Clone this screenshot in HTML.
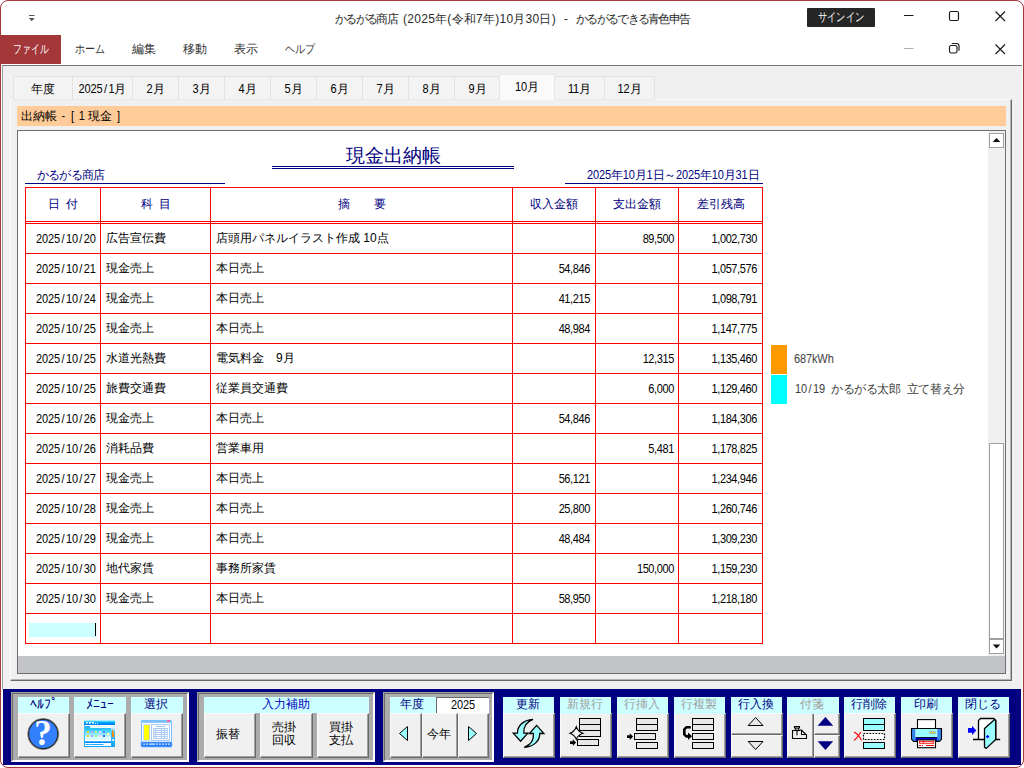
<!DOCTYPE html>
<html lang="ja"><head><meta charset="utf-8"><title>かるがる商店</title>
<style>
html,body{margin:0;padding:0;}
body{width:1024px;height:768px;overflow:hidden;background:#fff;position:relative;font-family:"Liberation Sans",sans-serif;font-size:12px;color:#000;line-height:1;}
div,span{box-sizing:border-box;}
.a{position:absolute;}
#win{position:absolute;left:0;top:0;width:1024px;height:768px;border:1px solid #a4373a;border-radius:8px;background:#fff;overflow:hidden;}
#inner{position:absolute;left:-1px;top:-1px;width:1024px;height:768px;}
/* title */
#ttl{position:absolute;left:335px;top:13px;width:400px;text-align:left;font-size:12px;color:#2b2b2b;white-space:nowrap;}
#signin{position:absolute;left:807px;top:8px;width:68px;height:19px;background:#262626;color:#fff;font-size:12px;text-align:center;line-height:19px;border-radius:1px;white-space:nowrap;}
#filetab{position:absolute;left:0;top:35px;width:61px;height:29px;background:#a4373a;color:#fff;text-align:center;line-height:29px;font-size:12px;white-space:nowrap;}
.rt{position:absolute;top:43px;height:14px;font-size:12px;color:#333;white-space:nowrap;text-align:center;}
.sq{display:inline-block;transform-origin:50% 50%;}
/* form area */
#form{position:absolute;left:2px;top:65px;width:1020px;height:624px;background:#f0f0f0;border-left:1px solid #a0a0a0;border-top:1px solid #767676;}
.tab{position:absolute;top:76px;height:24px;background:#f3f3f3;border:1px solid #e2e2e2;border-bottom:1px solid #e8e8e8;text-align:center;font-size:12px;line-height:24px;white-space:nowrap;}
.tab.sel{top:74px;height:26px;border-bottom:none;background:#fafafa;line-height:25px;z-index:2;border-color:#e8e8e8;}
#tabpage{position:absolute;left:10px;top:99px;width:1002px;height:582px;border-left:1px solid #fcfcfc;border-top:1px solid #f8f8f8;border-right:1px solid #696969;border-bottom:1px solid #696969;}
#tabpage:after{content:"";position:absolute;left:0;top:0;right:0;bottom:0;border-right:1px solid #b4b4b4;border-bottom:1px solid #b4b4b4;}
#band{position:absolute;left:17px;top:106px;width:989px;height:20px;background:#ffcc99;font-size:12px;line-height:20px;padding-left:4px;white-space:nowrap;}
#sub{position:absolute;left:17px;top:130px;width:989px;height:544px;background:#fff;border:1px solid #6e6e6e;}
#gband{position:absolute;left:18px;top:656px;width:987px;height:17px;background:#c4c5c9;}
/* table */
.navy{color:#000080;}
.vl{position:absolute;top:187px;width:1px;height:457px;background:#f00;}
.hl{position:absolute;left:25px;width:738px;height:1px;background:#f00;}
.hd{position:absolute;top:198px;height:14px;font-size:12px;color:#000080;text-align:center;white-space:nowrap;}
.rw{position:absolute;left:0;height:29px;width:1024px;font-size:12px;line-height:29px;white-space:nowrap;}
.rw span{position:absolute;top:0;height:29px;}
.rw span.n{top:1px;}
.sl{display:inline-block;width:5.9px;text-align:center;letter-spacing:0;}
.rw span.n span{position:static;}
.cm{letter-spacing:-0.3px;}
.n{font-family:"Liberation Sans",sans-serif;font-size:11px;letter-spacing:-0.12px;display:inline-block;transform:scaleY(1.17);transform-origin:50% 62%;}
.c1{left:36px;}
.c2{left:106px;}
.c3{left:216px;}
.c4{right:434px;letter-spacing:-0.4px;}
.c5{right:350px;letter-spacing:-0.4px;}
.c6{right:267px;letter-spacing:-0.4px;}
/* scrollbar */
#sbtrack{position:absolute;left:988px;top:131px;width:17px;height:525px;background:#f0f0f0;}
.sbb{position:absolute;left:989px;width:15px;height:15px;background:#fff;border:1px solid #a0a0a0;}
/* toolbar */
#tb{position:absolute;left:3px;top:689px;width:1018px;height:76px;background:#000080;}
.grp{position:absolute;top:692px;height:70px;background:#acacac;border-left:1px solid #a0a0a0;border-top:1px solid #a0a0a0;border-right:1px solid #fff;border-bottom:1px solid #fff;}
.grp:after{content:"";position:absolute;left:0;top:0;right:0;bottom:0;border-left:1px solid #696969;border-top:1px solid #696969;border-right:1px solid #fff;border-bottom:1px solid #fff;}
.lb{position:absolute;top:697px;height:16px;background:#ccffff;color:#000080;font-size:12px;text-align:center;line-height:15px;white-space:nowrap;text-indent:-2px;}
.lb.dis{color:#a0a0a0;height:17px;z-index:3;}
.bt{position:absolute;background:#f0f0f0;border-right:1px solid #696969;border-bottom:1px solid #696969;border-left:1px solid #fafafa;border-top:1px solid #fafafa;font-size:12px;text-align:center;white-space:nowrap;}
.bt:after{content:"";position:absolute;left:0;top:0;right:0;bottom:0;border-right:1px solid #a0a0a0;border-bottom:1px solid #a0a0a0;}
.bt svg{position:absolute;left:0;top:0;}

</style></head><body>
<div id="win"><div id="inner">
<!-- title bar -->
<div id="ttl"><span style="letter-spacing:-1.65px">かるがる商店</span><span style="letter-spacing:0.25px;margin-left:6px">(2025年(令和7年)10月30日)</span><span style="display:inline-block;width:20px;text-align:center">-</span><span style="letter-spacing:-1.68px">かるがるできる青色申告</span></div>
<div id="signin"><span class="sq" style="transform:scaleX(.77)">サインイン</span></div>
<div id="filetab"><span class="sq" style="transform:scaleX(.73)">ファイル</span></div>
<div class="rt" style="left:70px;width:40px;"><span class="sq" style="transform:scaleX(.84)">ホーム</span></div>
<div class="rt" style="left:124px;width:40px;">編集</div>
<div class="rt" style="left:175px;width:40px;">移動</div>
<div class="rt" style="left:226px;width:40px;">表示</div>
<div class="rt" style="left:279.5px;width:40px;"><span class="sq" style="transform:scaleX(.84)">ヘルプ</span></div>

<!-- form area -->
<div id="form"></div>
<div id="tabpage"></div>
<div class="tab" style="left:13px;width:60px;">年度</div>
<div class="tab" style="left:72px;width:61px;"><span class="n">2025<span class="sl">/</span>1</span>月</div>
<div class="tab" style="left:132px;width:47px;"><span class="n">2</span>月</div>
<div class="tab" style="left:178px;width:47px;"><span class="n">3</span>月</div>
<div class="tab" style="left:224px;width:47px;"><span class="n">4</span>月</div>
<div class="tab" style="left:270px;width:47px;"><span class="n">5</span>月</div>
<div class="tab" style="left:316px;width:47px;"><span class="n">6</span>月</div>
<div class="tab" style="left:362px;width:47px;"><span class="n">7</span>月</div>
<div class="tab" style="left:408px;width:47px;"><span class="n">8</span>月</div>
<div class="tab" style="left:454px;width:47px;"><span class="n">9</span>月</div>
<div class="tab" style="left:554px;width:51px;"><span class="n">11</span>月</div>
<div class="tab" style="left:604px;width:51px;"><span class="n">12</span>月</div>
<div class="tab sel" style="left:499px;width:56px;"><span class="n">10</span>月</div>
<div id="band">出納帳 <span class="n"><span class="sl">-</span></span> <span class="n"><span class="sl">[</span></span> <span class="n">1</span> 現金 <span class="n"><span class="sl">]</span></span></div>
<div id="sub"></div>
<div id="gband"></div>

<!-- report header -->
<div class="a navy" style="left:346px;top:146px;width:96px;font-size:19px;line-height:19px;white-space:nowrap;">現金出納帳</div>
<div class="a" style="left:272px;top:166px;width:242px;height:3px;border-top:1px solid #000080;border-bottom:1px solid #000080;"></div>
<div class="a navy" style="left:37px;top:169px;white-space:nowrap;letter-spacing:-0.8px;">かるがる商店</div>
<div class="a" style="left:25px;top:183px;width:200px;height:1px;background:#000080;"></div>
<div class="a navy" style="left:587px;top:169px;white-space:nowrap;letter-spacing:-0.25px;"><span class="n">2025</span>年<span class="n">10</span>月<span class="n">1</span>日～<span class="n">2025</span>年<span class="n">10</span>月<span class="n">31</span>日</div>
<div class="a" style="left:565px;top:183px;width:198px;height:1px;background:#000080;"></div>

<!-- table grid -->
<div class="hl" style="top:187px"></div>
<div class="hl" style="top:221px"></div>
<div class="hl" style="top:223px"></div>
<div class="hl" style="top:253px"></div>
<div class="hl" style="top:283px"></div>
<div class="hl" style="top:313px"></div>
<div class="hl" style="top:343px"></div>
<div class="hl" style="top:373px"></div>
<div class="hl" style="top:403px"></div>
<div class="hl" style="top:433px"></div>
<div class="hl" style="top:463px"></div>
<div class="hl" style="top:493px"></div>
<div class="hl" style="top:523px"></div>
<div class="hl" style="top:553px"></div>
<div class="hl" style="top:583px"></div>
<div class="hl" style="top:613px"></div>
<div class="hl" style="top:643px"></div>
<div class="vl" style="left:25px"></div>
<div class="vl" style="left:100px"></div>
<div class="vl" style="left:210px"></div>
<div class="vl" style="left:512px"></div>
<div class="vl" style="left:595px"></div>
<div class="vl" style="left:678px"></div>
<div class="vl" style="left:762px"></div>
<div class="hd" style="left:26px;width:74px;">日&ensp;付</div>
<div class="hd" style="left:101px;width:109px;">科&ensp;目</div>
<div class="hd" style="left:211px;width:301px;">摘　　要</div>
<div class="hd" style="left:513px;width:82px;">収入金額</div>
<div class="hd" style="left:596px;width:82px;">支出金額</div>
<div class="hd" style="left:679px;width:83px;">差引残高</div>
<div class="rw" style="top:224px"><span class="n c1">2025<span class="sl">/</span>10<span class="sl">/</span>20</span><span class="j c2">広告宣伝費</span><span class="j c3">店頭用パネルイラスト作成 10点</span><span class="n c4"></span><span class="n c5">89<span class="cm">,</span>500</span><span class="n c6">1<span class="cm">,</span>002<span class="cm">,</span>730</span></div>
<div class="rw" style="top:254px"><span class="n c1">2025<span class="sl">/</span>10<span class="sl">/</span>21</span><span class="j c2">現金売上</span><span class="j c3">本日売上</span><span class="n c4">54<span class="cm">,</span>846</span><span class="n c5"></span><span class="n c6">1<span class="cm">,</span>057<span class="cm">,</span>576</span></div>
<div class="rw" style="top:284px"><span class="n c1">2025<span class="sl">/</span>10<span class="sl">/</span>24</span><span class="j c2">現金売上</span><span class="j c3">本日売上</span><span class="n c4">41<span class="cm">,</span>215</span><span class="n c5"></span><span class="n c6">1<span class="cm">,</span>098<span class="cm">,</span>791</span></div>
<div class="rw" style="top:314px"><span class="n c1">2025<span class="sl">/</span>10<span class="sl">/</span>25</span><span class="j c2">現金売上</span><span class="j c3">本日売上</span><span class="n c4">48<span class="cm">,</span>984</span><span class="n c5"></span><span class="n c6">1<span class="cm">,</span>147<span class="cm">,</span>775</span></div>
<div class="rw" style="top:344px"><span class="n c1">2025<span class="sl">/</span>10<span class="sl">/</span>25</span><span class="j c2">水道光熱費</span><span class="j c3">電気料金　9月</span><span class="n c4"></span><span class="n c5">12<span class="cm">,</span>315</span><span class="n c6">1<span class="cm">,</span>135<span class="cm">,</span>460</span></div>
<div class="rw" style="top:374px"><span class="n c1">2025<span class="sl">/</span>10<span class="sl">/</span>25</span><span class="j c2">旅費交通費</span><span class="j c3">従業員交通費</span><span class="n c4"></span><span class="n c5">6<span class="cm">,</span>000</span><span class="n c6">1<span class="cm">,</span>129<span class="cm">,</span>460</span></div>
<div class="rw" style="top:404px"><span class="n c1">2025<span class="sl">/</span>10<span class="sl">/</span>26</span><span class="j c2">現金売上</span><span class="j c3">本日売上</span><span class="n c4">54<span class="cm">,</span>846</span><span class="n c5"></span><span class="n c6">1<span class="cm">,</span>184<span class="cm">,</span>306</span></div>
<div class="rw" style="top:434px"><span class="n c1">2025<span class="sl">/</span>10<span class="sl">/</span>26</span><span class="j c2">消耗品費</span><span class="j c3">営業車用</span><span class="n c4"></span><span class="n c5">5<span class="cm">,</span>481</span><span class="n c6">1<span class="cm">,</span>178<span class="cm">,</span>825</span></div>
<div class="rw" style="top:464px"><span class="n c1">2025<span class="sl">/</span>10<span class="sl">/</span>27</span><span class="j c2">現金売上</span><span class="j c3">本日売上</span><span class="n c4">56<span class="cm">,</span>121</span><span class="n c5"></span><span class="n c6">1<span class="cm">,</span>234<span class="cm">,</span>946</span></div>
<div class="rw" style="top:494px"><span class="n c1">2025<span class="sl">/</span>10<span class="sl">/</span>28</span><span class="j c2">現金売上</span><span class="j c3">本日売上</span><span class="n c4">25<span class="cm">,</span>800</span><span class="n c5"></span><span class="n c6">1<span class="cm">,</span>260<span class="cm">,</span>746</span></div>
<div class="rw" style="top:524px"><span class="n c1">2025<span class="sl">/</span>10<span class="sl">/</span>29</span><span class="j c2">現金売上</span><span class="j c3">本日売上</span><span class="n c4">48<span class="cm">,</span>484</span><span class="n c5"></span><span class="n c6">1<span class="cm">,</span>309<span class="cm">,</span>230</span></div>
<div class="rw" style="top:554px"><span class="n c1">2025<span class="sl">/</span>10<span class="sl">/</span>30</span><span class="j c2">地代家賃</span><span class="j c3">事務所家賃</span><span class="n c4"></span><span class="n c5">150<span class="cm">,</span>000</span><span class="n c6">1<span class="cm">,</span>159<span class="cm">,</span>230</span></div>
<div class="rw" style="top:584px"><span class="n c1">2025<span class="sl">/</span>10<span class="sl">/</span>30</span><span class="j c2">現金売上</span><span class="j c3">本日売上</span><span class="n c4">58<span class="cm">,</span>950</span><span class="n c5"></span><span class="n c6">1<span class="cm">,</span>218<span class="cm">,</span>180</span></div>
<div class="a" style="left:29px;top:623px;width:67px;height:14px;background:#ccffff;"></div>
<div class="a" style="left:95px;top:623px;width:1px;height:13px;background:#000;"></div>

<!-- sticky notes -->
<div class="a" style="left:771px;top:345px;width:16px;height:29px;background:#ff9900;"></div>
<div class="a" style="left:771px;top:375px;width:16px;height:29px;background:#00ffff;"></div>
<div class="a" style="left:794px;top:353px;color:#404040;white-space:nowrap;"><span class="n">687kWh</span></div>
<div class="a" style="left:795px;top:383px;color:#404040;white-space:nowrap;letter-spacing:-0.35px;"><span class="n">10<span class="sl">/</span>19</span>&nbsp; かるがる太郎&nbsp; 立て替え分</div>

<!-- scrollbar -->
<div id="sbtrack"></div>
<div class="sbb" style="top:133px;"></div>
<div class="sbb" style="top:639px;"></div>
<div class="sbb" style="top:443px;height:196px;"></div>

<!-- toolbar -->
<div id="tb"></div>
<div class="grp" style="left:11px;width:178px;"></div>
<div class="grp" style="left:197px;width:178px;"></div>
<div class="grp" style="left:383px;width:111px;"></div>

<div class="lb" style="left:18px;width:51px;font-size:14px;text-indent:0;">ﾍﾙﾌﾟ</div>
<div class="lb" style="left:74px;width:52px;font-size:14px;text-indent:0;">ﾒﾆｭｰ</div>
<div class="lb" style="left:131px;width:52px;">選択</div>
<div class="bt" style="left:18px;top:713px;width:52px;height:45px;"></div>
<div class="bt" style="left:74px;top:713px;width:52px;height:45px;"></div>
<div class="bt" style="left:131px;top:713px;width:52px;height:45px;"></div>

<div class="lb" style="left:204px;width:165px;color:#0000c0;">入力補助</div>
<div class="bt" style="left:204px;top:713px;width:52px;height:45px;line-height:40px;text-indent:-4px;">振替</div>
<div class="bt" style="left:260px;top:713px;width:53px;height:45px;line-height:13px;padding-top:7px;padding-right:5px;">売掛<br>回収</div>
<div class="bt" style="left:317px;top:713px;width:52px;height:45px;line-height:13px;padding-top:7px;padding-right:5px;">買掛<br>支払</div>

<div class="lb" style="left:390px;width:46px;">年度</div>
<div class="a" style="left:436px;top:697px;width:53px;height:16px;background:#fff;border-left:1px solid #696969;border-top:1px solid #696969;text-align:center;line-height:15px;"><span class="n">2025</span></div>
<div class="bt" style="left:390px;top:713px;width:32px;height:45px;"></div>
<div class="bt" style="left:422px;top:713px;width:36px;height:45px;line-height:40px;text-indent:-3px;">今年</div>
<div class="bt" style="left:458px;top:713px;width:31px;height:45px;"></div>

<div class="lb" style="left:503px;width:51px;">更新</div>
<div class="lb dis" style="left:560px;width:51px;">新規行</div>
<div class="lb dis" style="left:617px;width:51px;">行挿入</div>
<div class="lb dis" style="left:674px;width:51px;">行複製</div>
<div class="lb" style="left:731px;width:51px;">行入換</div>
<div class="lb dis" style="left:787px;width:52px;">付箋</div>
<div class="lb" style="left:844px;width:51px;">行削除</div>
<div class="lb" style="left:901px;width:51px;">印刷</div>
<div class="lb" style="left:958px;width:51px;">閉じる</div>
<div class="bt" style="left:503px;top:713px;width:52px;height:45px;"></div>
<div class="bt" style="left:560px;top:713px;width:52px;height:45px;"></div>
<div class="bt" style="left:617px;top:713px;width:52px;height:45px;"></div>
<div class="bt" style="left:674px;top:713px;width:52px;height:45px;"></div>
<div class="bt" style="left:731px;top:713px;width:52px;height:22px;"></div>
<div class="bt" style="left:731px;top:735px;width:52px;height:23px;"></div>
<div class="bt" style="left:787px;top:713px;width:27px;height:45px;"></div>
<div class="bt" style="left:814px;top:713px;width:26px;height:22px;"></div>
<div class="bt" style="left:814px;top:735px;width:26px;height:23px;"></div>
<div class="bt" style="left:844px;top:713px;width:52px;height:45px;"></div>
<div class="bt" style="left:901px;top:713px;width:52px;height:45px;"></div>
<div class="bt" style="left:958px;top:713px;width:52px;height:45px;"></div>

<!-- icon overlay -->
<svg class="a" style="left:0;top:0;" width="1024" height="768" viewBox="0 0 1024 768">
<defs>
<linearGradient id="mg" x1="0" y1="0" x2="0" y2="1"><stop offset="0" stop-color="#22b4f0"/><stop offset="0.55" stop-color="#aaf0ff"/><stop offset="1" stop-color="#e8fcff"/></linearGradient>
<linearGradient id="mg2" x1="0" y1="0" x2="0" y2="1"><stop offset="0" stop-color="#22aaff"/><stop offset="0.35" stop-color="#55ccff"/><stop offset="0.6" stop-color="#33bbff"/><stop offset="1" stop-color="#11a0ff"/></linearGradient>
<linearGradient id="mt" x1="0" y1="0" x2="0" y2="1"><stop offset="0" stop-color="#66ddff"/><stop offset="0.4" stop-color="#00aaff"/><stop offset="1" stop-color="#0078f0"/></linearGradient>
<linearGradient id="mb" x1="0" y1="0" x2="0" y2="1"><stop offset="0" stop-color="#22aaff"/><stop offset="0.25" stop-color="#33ccff"/><stop offset="0.6" stop-color="#aaf0ff"/><stop offset="0.8" stop-color="#fff"/><stop offset="1" stop-color="#fff"/></linearGradient>
<linearGradient id="mr" x1="0" y1="0" x2="0" y2="1"><stop offset="0" stop-color="#fff"/><stop offset="1" stop-color="#55ccff"/></linearGradient>
</defs>
<!-- QAT -->
<path d="M29 15.5H34.5" stroke="#555" stroke-width="1" fill="none"/>
<path d="M28.8 18H34.7L31.75 21.2Z" fill="#555"/>
<!-- window controls -->
<g stroke="#1a1a1a" stroke-width="1.15" fill="none">
<path d="M904 15.5H913.5"/>
<rect x="949.5" y="11.5" width="9" height="9" rx="1.5"/>
<path d="M995.5 11.5L1005 21M1005 11.5L995.5 21"/>
<rect x="949.5" y="45.5" width="7.5" height="7.5" rx="1.8"/>
<path d="M951.8 43.5H956.5A2.5 2.5 0 0 1 959 46V50.7"/>
<path d="M995.5 44.5L1005 54M1005 44.5L995.5 54"/>
</g>
<path d="M904 48.5H913.5" stroke="#b0b0b0" stroke-width="1" fill="none"/>
<!-- scrollbar arrows -->
<path d="M992.7 142L996.5 138L1000.3 142Z" fill="#111"/>
<path d="M992.7 644.5L1000.3 644.5L996.5 648.5Z" fill="#111"/>
<!-- help -->
<circle cx="43.2" cy="734" r="15.6" fill="none" stroke="#8c8c8c" stroke-width="1"/>
<circle cx="43.2" cy="734" r="14.6" fill="#3380ff" stroke="#2a2a2a" stroke-width="1.2"/>
<text x="43" y="745.3" text-anchor="middle" font-family="Liberation Serif" font-weight="bold" font-size="35" fill="#fff">?</text>
<!-- menu icon -->
<rect x="84" y="720.3" width="31" height="26.7" fill="url(#mg2)"/>
<rect x="84" y="720.3" width="31" height="4.7" fill="url(#mt)"/>
<rect x="84" y="720.3" width="31" height="0.9" fill="#b8ffff"/>
<rect x="86" y="722" width="1.7" height="1.6" fill="#fff"/><rect x="89" y="722" width="1.9" height="1.6" fill="#fff"/><rect x="92" y="722" width="1.9" height="1.6" fill="#fff"/><rect x="95" y="723" width="1" height="1" fill="#dff"/><rect x="97" y="723" width="1" height="1" fill="#dff"/>
<rect x="84.800" y="725" width="30.200" height="1.2" fill="#fff"/>
<rect x="111" y="726" width="4" height="6" fill="url(#mr)"/>
<path d="M85 726.200H90V728H111V741.500H85Z" fill="url(#mb)"/>
<rect x="90.300" y="726" width="20.700" height="2" fill="#fff"/>
<rect x="91.300" y="726.300" width="4.500" height="1.300" fill="#ccffff"/><rect x="97.200" y="726.300" width="4.500" height="1.300" fill="#ccffff"/><rect x="103.200" y="726.300" width="4.500" height="1.300" fill="#ccffff"/>
<rect x="87" y="731" width="2" height="2" fill="#ffcc22"/><rect x="91" y="731" width="2" height="2" fill="#cc99ff"/><rect x="95" y="731" width="2" height="2" fill="#bbff88"/><rect x="99" y="731" width="2" height="2" fill="#ffccf0"/><rect x="103" y="731" width="2" height="2" fill="#6688ff"/>
<rect x="87" y="735" width="2" height="2" fill="#ffcc22"/><rect x="91" y="735" width="2" height="2" fill="#aa99ff"/><rect x="95" y="735" width="2" height="2" fill="#88ff88"/><rect x="99" y="735" width="2" height="2" fill="#ffccf0"/><rect x="103" y="735" width="2" height="2" fill="#3366ee"/>
<rect x="107" y="733" width="2" height="2" fill="#ffff88"/>
<rect x="86" y="738" width="24" height="1.800" fill="#ccffff"/>
<rect x="85" y="741.500" width="26" height="1.500" fill="#0088ff"/>
<rect x="85" y="743" width="26" height="3" fill="#fff"/>
<path d="M86 744.500h3M90.200 744.500h12.800" stroke="#22aaff" stroke-width="1" stroke-linecap="round"/>
<rect x="112" y="730" width="1.200" height="7" fill="#ff8800"/><rect x="113" y="733" width="1.100" height="4" fill="#ff8800"/>
<rect x="112.300" y="739.200" width="1.800" height="1.800" fill="#fff"/>
<!-- select icon -->
<path d="M142 720H171L172 721V746L171 747H142L141 746V721Z" fill="#7abfff"/>
<rect x="142" y="722.800" width="29" height="19.200" fill="#fff"/>
<rect x="141.500" y="742" width="30" height="4.800" rx="0.800" fill="#2277ff"/>
<rect x="141" y="742" width="31" height="5" rx="1" fill="none" stroke="#66aaff" stroke-width="0.700"/>
<rect x="143.1" y="743.300" width="1.9" height="1.700" fill="#b0d0f0"/><rect x="146" y="743.300" width="2" height="1.700" fill="#b0d0f0"/><rect x="149" y="743.300" width="6" height="1.700" fill="#b0d0f0"/><rect x="156" y="743.300" width="1.9" height="1.700" fill="#b0d0f0"/><rect x="159" y="743.300" width="1.9" height="1.700" fill="#b0d0f0"/><rect x="162" y="743.300" width="1.9" height="1.700" fill="#b0d0f0"/><rect x="165" y="743.300" width="1.9" height="1.700" fill="#b0d0f0"/><rect x="168" y="743.300" width="1.9" height="1.700" fill="#b0d0f0"/>
<rect x="167" y="720" width="3" height="1.900" fill="#ff6699"/>
<rect x="143.400" y="724.400" width="6.500" height="16.200" fill="#a8c8f0"/>
<rect x="144" y="725.100" width="5.200" height="14.800" fill="#ffff00"/>
<rect x="151.400" y="724.600" width="18.200" height="15.800" fill="#fff" stroke="#a0c4f0" stroke-width="0.900"/>
<path d="M156 726.500h9" stroke="#a0c4f0" stroke-width="1" stroke-linecap="round"/>
<rect x="153.200" y="728.100" width="14.600" height="10.800" rx="0.500" fill="#a8c8f0"/>
<path d="M154 729.6h1.200M156 729.6h5M162 729.6h2.100M165 729.6h2.100" stroke="#fff" stroke-width="1"/><path d="M154 731.6h1.200M156 731.6h5M162 731.6h2.100M165 731.6h2.100" stroke="#fff" stroke-width="1"/><path d="M154 733.6h1.200M156 733.6h5M162 733.6h2.100M165 733.6h2.100" stroke="#fff" stroke-width="1"/><path d="M154 735.6h1.200M156 735.6h5M162 735.6h2.100M165 735.6h2.100" stroke="#fff" stroke-width="1"/><path d="M154 737.6h1.200M156 737.6h5M162 737.6h2.100M165 737.6h2.100" stroke="#fff" stroke-width="1"/>
<!-- year arrows -->
<path d="M399.5 733.5L407.5 726.5V740.5Z" fill="#99ffff" stroke="#000" stroke-width="1" stroke-linejoin="miter"/>
<path d="M476.5 733.5L468.5 726.5V740.5Z" fill="#99ffff" stroke="#000" stroke-width="1"/>
<!-- refresh -->
<g fill="#99ffff" stroke="#000" stroke-width="1.3" stroke-linejoin="miter">
<path id="ra" d="M533 719.3C523 720 517.300 726 517.500 733.200L513.300 733.200L520.600 741.300L527.800 733.200L523.800 733.200C523.200 727 526 722 533 719.300Z"/>
<path transform="translate(-0.3,0.7)" d="M524.500 746.700C534.500 746 540.200 740 540 732.800L544.200 732.800L536.900 724.700L529.700 732.800L533.700 732.800C534.300 739 531.500 744 524.500 746.700Z"/>
</g>
<!-- new row -->
<g fill="#e8e8e8" stroke="#000" stroke-width="1">
<rect x="579.5" y="718.5" width="21" height="18"/>
<path d="M579.500 724.500h21M579.500 730.500h21" fill="none"/>
<rect x="577.5" y="739.5" width="21" height="6"/>
<path d="M576.300 726.800Q578 731.700 583 733.300Q578 734.900 576.300 739.400Q574.600 734.900 570 733.300Q574.600 731.700 576.300 726.800Z" fill="#f4f4f4" stroke-width="1.100"/>
</g>
<path d="M570 741.200h2.800v-2l3.300 3.400l-3.300 3.400v-2h-2.800z" fill="#000"/>
<!-- insert row -->
<g fill="#e8e8e8" stroke="#000" stroke-width="1">
<rect x="636.5" y="718.5" width="21" height="12"/>
<path d="M636.500 724.500h21" fill="none"/>
<rect x="634.5" y="733.5" width="21" height="6"/>
<rect x="636.5" y="742.5" width="21" height="6"/>
</g>
<path d="M627 735.200h2.800v-2l3.300 3.400l-3.300 3.400v-2h-2.800z" fill="#000"/>
<!-- copy row -->
<g fill="#e8e8e8" stroke="#000" stroke-width="1">
<rect x="692.5" y="718.5" width="21" height="12"/>
<path d="M692.500 724.500h21" fill="none"/>
<rect x="692.5" y="733.5" width="21" height="6"/>
<rect x="692.5" y="742.5" width="21" height="6"/>
</g>
<path d="M690.800 727.300H686.300L684.300 729.300V734.300L686.300 736.400H689" fill="none" stroke="#000" stroke-width="2.600" stroke-linejoin="round"/>
<path d="M688 732.600L692.100 736.300L688 740.100Z" fill="#000"/>
<!-- swap -->
<path d="M755.600 717.500L763 725.500H748.200Z" fill="#e8e8e8" stroke="#000" stroke-width="1"/>
<path d="M755.600 749.500L763 741.500H748.200Z" fill="#e8e8e8" stroke="#000" stroke-width="1"/>
<!-- sticky -->
<g fill="none" stroke="#000" stroke-width="1.100">
<path d="M795 730.500H792.500V738.500H806.500V735L801.500 730H799.500" fill="#f0f0f0"/>
<path d="M801.500 730V734.500H806.500"/>
<path d="M794.500 726.500H799.500V728H794.500Z"/>
<path d="M795.800 728V730.300M798.300 728V730.300"/>
<path d="M794 730.500H800.200"/>
<path d="M797 730.500V735.200"/>
</g>
<path d="M825.400 717L833.200 725.700H817.600Z" fill="#000080"/>
<path d="M825.400 750L833.200 741.200H817.600Z" fill="#000080"/>
<!-- delete row -->
<g fill="#99ffff" stroke="#000" stroke-width="1">
<rect x="863.5" y="718.500" width="21" height="12"/>
<path d="M863.500 724.500h21" fill="none"/>
<rect x="863.500" y="733.500" width="21" height="6" fill="#fff" stroke-dasharray="1.700 1.300" stroke-width="1.200"/>
<rect x="863.5" y="742.500" width="21" height="6"/>
</g>
<path d="M854 732C857 733.500 860 737 861.500 740.500M861 732C859 735 856.500 738.500 854 740.500" fill="none" stroke="#ff0000" stroke-width="1.2"/>
<!-- print -->
<rect x="917.500" y="719.600" width="18" height="9" fill="#fff" stroke="#000" stroke-width="1.100"/>
<path d="M911.500 728.500H941.500V739.300L939.300 741.400H913.700L911.500 739.300Z" fill="#3388ee" stroke="#000" stroke-width="1.100"/>
<rect x="915.400" y="729" width="21.900" height="8.300" fill="#f4f8ff"/>
<rect x="916" y="729" width="20.800" height="8.300" fill="#99ffff"/>
<rect x="915.800" y="737" width="21.400" height="0.900" fill="#000"/>
<rect x="915.800" y="737.900" width="21.400" height="3" fill="#0000dd"/>
<rect x="929.300" y="731.300" width="6.500" height="2.600" fill="#a0a0a0"/>
<rect x="930.100" y="732" width="1.100" height="1.200" fill="#ffff00"/><rect x="932.100" y="732" width="1.100" height="1.200" fill="#ffff00"/><rect x="934.100" y="732" width="1.100" height="1.200" fill="#ffff00"/>
<rect x="917.500" y="739.900" width="18" height="7.800" fill="#fff" stroke="#000" stroke-width="1.100"/>
<path d="M919.300 741.400H933.800M919.300 743.300H933.800M919.600 740.600V743.300M923.300 740.600V743.300M933.400 740.600V743.300" stroke="#ff0000" stroke-width="0.900" fill="none"/>
<path d="M919 745.500H921M922 745.500H923M926 745.500H934" stroke="#ff0000" stroke-width="1" fill="none"/>
<!-- close door -->
<path d="M978.500 739.500V720.500L980.500 718.500H993.700L995.700 720.500V739.500" fill="#fff" stroke="#000" stroke-width="1.300"/>
<path d="M973 739.500H984.500M995.700 739.500H1000.200" stroke="#000" stroke-width="1.300" fill="none"/>
<path d="M984.500 728.500L994.700 719.600L995.700 720.500V739.500L986.300 748.400L984.500 747.300Z" fill="#99ffff" stroke="#000" stroke-width="1.300" stroke-linejoin="round"/>
<path d="M968 728H972V725.800L976.300 730.400L972 735V732.800H968Z" fill="#0000ff"/>
<path d="M987.600 735V738.200M986 736.600H989.200" stroke="#0000ff" stroke-width="1.300"/>

</svg>
</div></div>

</body></html>
